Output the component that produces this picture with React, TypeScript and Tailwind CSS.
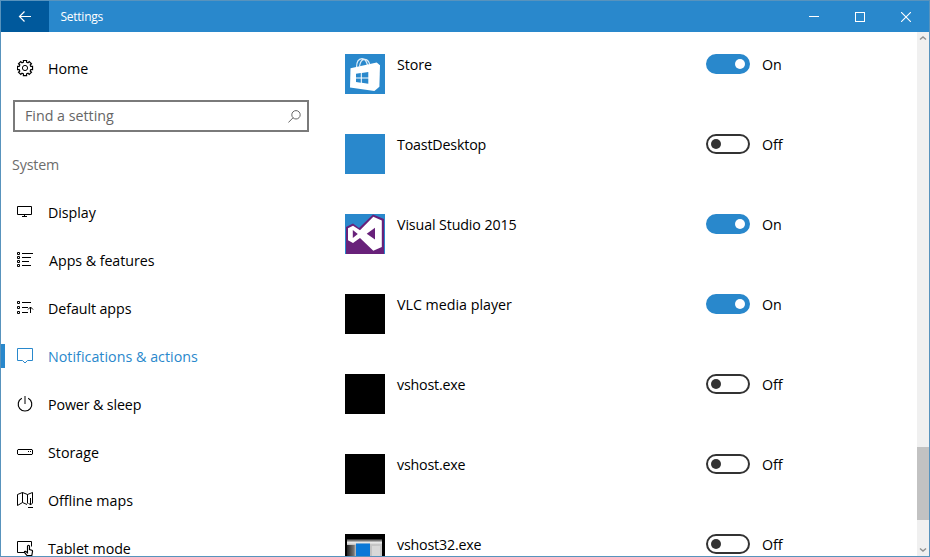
import React from "react";

type IconProps = { children: React.ReactNode };

function Glyph({ children }: IconProps) {
  return (
    <svg width="18" height="18" viewBox="0 0 18 18" fill="none" stroke="currentColor" strokeWidth="1" className="block shrink-0">
      {children}
    </svg>
  );
}

const gearPath = Array.from({ length: 8 }, (_, i) => {
  const pt = (r: number, deg: number) => {
    const a = ((deg + i * 45) * Math.PI) / 180;
    return `${(8 + r * Math.cos(a)).toFixed(2)} ${(8 + r * Math.sin(a)).toFixed(2)}`;
  };
  return `${i ? "L" : "M"}${pt(7.7, -12)} L${pt(7.7, 12)} L${pt(6, 15)} L${pt(6, 30)}`;
}).join(" ") + "Z";

const icons = {
  home: (
    <Glyph>
      <path d={gearPath} strokeWidth="1.200" />
      <circle cx="8" cy="8" r="2.6" />
    </Glyph>
  ),
  display: (
    <Glyph>
      <path d="M.5 2.500h14v8H.5zM7.500 10.500v2M5 12.500h5" />
    </Glyph>
  ),
  apps: (
    <Glyph>
      <path d="M.5.5h2v2h-2zM.5 4.5h2v2h-2zM.5 8.5h2v2h-2zM.5 12.5h2v2h-2zM5 1.5h11M5 5.5h9M5 9.5h7M5 13.5h9" />
    </Glyph>
  ),
  defaults: (
    <Glyph>
      <path d="M.5 1.5h2v2h-2zM.5 6.5h2v2h-2zM.5 11.5h2v2h-2zM5 2.5h9M5 7.5h6M5 12.5h6M13.5 13V7M11 9.5L13.5 7l2.5 2.5" />
    </Glyph>
  ),
  notifications: (
    <Glyph>
      <path d="M.5.5h15v12h-5L8 15l-2.5-2.5h-5z" />
    </Glyph>
  ),
  power: (
    <Glyph>
      <path d="M4.800 2.200a6.800 6.800 0 1 0 6.400 0" strokeWidth="1.150" />
      <path d="M8 0v8" />
    </Glyph>
  ),
  storage: (
    <Glyph>
      <path d="M1 5.5h14l.5.5v4l-.5.5H1l-.5-.5V6zM11 7.5h1M13 7.5h1" />
    </Glyph>
  ),
  maps: (
    <Glyph>
      <path d="M10 12.500L5.500 10.500.5 13.500v-11l5-2 5 2 5-2V8M5.500.5v10M10.500 2.500v9M13.500 6v7M11.500 11l2 2 2-2M11 15.500h5M15.500 8v3" />
    </Glyph>
  ),
  tablet: (
    <Glyph>
      <path d="M7 12.500H.5V1.500h14v5" />
      <path strokeWidth="1.150" d="M10.500 11V6.200a1 1 0 0 1 2 0v3.300l2.400.8q.8.4.6 1.200l-.7 4H10L7.500 12.400q-.3-1.300 1-1l2 1.400V11" />
    </Glyph>
  ),
};

type NavItem = { label: string; icon: React.ReactNode; tracking: string; active?: boolean };

const navItems: NavItem[] = [
  { label: "Display", icon: icons.display, tracking: "tracking-[-0.05px]" },
  { label: "Apps & features", icon: icons.apps, tracking: "pl-px tracking-[-0.05px]" },
  { label: "Default apps", icon: icons.defaults, tracking: "tracking-[-0.08px]" },
  { label: "Notifications & actions", icon: icons.notifications, tracking: "tracking-[0.03px]", active: true },
  { label: "Power & sleep", icon: icons.power, tracking: "tracking-[-0.12px]" },
  { label: "Storage", icon: icons.storage, tracking: "" },
  { label: "Offline maps", icon: icons.maps, tracking: "" },
  { label: "Tablet mode", icon: icons.tablet, tracking: "tracking-[-0.05px]" },
];

function NavRow({ label, icon, tracking, active }: NavItem) {
  return (
    <div className={`flex h-12 shrink-0 items-center pt-0.5 ${active ? "text-[#2988cc]" : "text-black"}`}>
      <div className={`mt-2.5 h-6 w-1 self-start ${active ? "bg-[#2988cc]" : ""}`} />
      <div className="ml-3 w-[31px]">{icon}</div>
      <span className={tracking}>{label}</span>
    </div>
  );
}

function StoreIcon() {
  return (
    <svg width="40" height="40" viewBox="0 0 40 40" className="block">
      <path fill="#2988cc" d="M0 0h40v40H0z" />
      <path fill="#fff" d="M5.500 14.300L31.700 8.500l3.300 2.800-.6 21.500-5 4.200L5 33.500z" />
      <path fill="none" stroke="#fff" strokeOpacity=".85" strokeWidth="1.200" d="M11.500 13.500c0-5 2-8.700 5.500-8.900 2.800 0 4.600 3 5.500 6.500M14.500 12.500c.5-4 2.500-7 5-7.200 2.600 0 4.500 2.500 5.200 5" />
      <path fill="#2988cc" d="M11 19.800l4.800-.7v4.400H11zM16.800 19l6.500-1v5.500h-6.500zM11 24.400h4.800v4.300l-4.800-.6zM16.800 24.400h6.500v5.300l-6.500-.9z" />
    </svg>
  );
}

function VisualStudioIcon() {
  return (
    <svg width="40" height="40" viewBox="0 0 40 40" className="block">
      <path fill="#2988cc" d="M0 0h40v40H0z" />
      <path fill="#68217a" d="M1 13l7-3.500 6 4.500L28 .5l11 4.500v35H1z" />
      <path
        fill="#fff"
        fillRule="evenodd"
        d="M28.300 2.800l8.500 3.800v26.400l-8.500 3.800L15 24l-7 5-5-2.700V14.200l5-2.500 7 4.600zM30 13.800l-8.300 5.900 8.300 5.900zM7.800 16v8l5-4z"
      />
    </svg>
  );
}

function HostIcon() {
  return (
    <svg width="40" height="40" viewBox="0 0 40 40" className="block">
      <defs>
        <linearGradient id="host-pane" x1="0" x2="1" y1="0" y2="0">
          <stop offset="0" stopColor="#222" />
          <stop offset=".2" stopColor="#777" />
          <stop offset=".25" stopColor="#bbb" />
          <stop offset="1" stopColor="#c8c8c8" />
        </linearGradient>
        <linearGradient id="host-top" x1="0" x2="0" y1="0" y2="1">
          <stop offset="0" stopColor="#222" />
          <stop offset=".6" stopColor="#eee" />
          <stop offset="1" stopColor="#bbb" />
        </linearGradient>
      </defs>
      <path d="M0 0h40v40H0z" />
      <path fill="url(#host-pane)" d="M2 10h35v30H2z" />
      <path fill="url(#host-top)" d="M2 5h35v6H2z" />
      <path fill="#0a78d7" d="M11 9.500h14V40H11z" />
      <path fill="#d8d8d8" d="M27 12h8v10h-8z" />
    </svg>
  );
}

type AppEntry = { name: string; icon: React.ReactNode; tracking: string; on: boolean };

const blackTile = <div className="size-10 bg-black" />;

const apps: AppEntry[] = [
  { name: "Store", icon: <StoreIcon />, tracking: "tracking-[-0.1px]", on: true },
  { name: "ToastDesktop", icon: <div className="size-10 bg-[#2988cc]" />, tracking: "tracking-[-0.17px]", on: false },
  { name: "Visual Studio 2015", icon: <VisualStudioIcon />, tracking: "tracking-[-0.12px]", on: true },
  { name: "VLC media player", icon: blackTile, tracking: "", on: true },
  { name: "vshost.exe", icon: blackTile, tracking: "tracking-[-0.2px]", on: false },
  { name: "vshost.exe", icon: blackTile, tracking: "tracking-[-0.2px]", on: false },
  { name: "vshost32.exe", icon: <HostIcon />, tracking: "tracking-[-0.18px]", on: false },
];

function Toggle({ on }: { on: boolean }) {
  return (
    <div
      className={`flex h-5 w-11 items-center rounded-full border-2 ${
        on ? "justify-end border-[#2988cc] bg-[#2988cc] pr-[3px]" : "border-[#333] bg-white pl-[3px]"
      }`}
    >
      <div className={`size-2.5 rounded-full ${on ? "bg-white" : "bg-[#333]"}`} />
    </div>
  );
}

function AppRow({ name, icon, tracking, on }: AppEntry) {
  return (
    <div className="flex h-20 shrink-0 items-start">
      <div className="w-10">{icon}</div>
      <span className={`ml-3 w-[309px] ${tracking}`}>{name}</span>
      <Toggle on={on} />
      <span className="ml-3">{on ? "On" : "Off"}</span>
    </div>
  );
}

export default function App() {
  return (
    <div className="flex h-[557px] w-[930px] flex-col overflow-hidden border border-[#5893bd] bg-white font-['Open_Sans','Noto_Sans',sans-serif] text-[14.25px] leading-[22px] text-black">
      <header className="flex h-[31px] shrink-0 bg-[#2988cc] text-white">
        <div className="flex w-12 items-center justify-center bg-[#00599c]">
          <svg width="14" height="12" viewBox="0 0 14 12" fill="none" stroke="currentColor" strokeWidth="1.200">
            <path d="M13 5.500H1.500M6.500.5l-5 5 5 5" />
          </svg>
        </div>
        <span className="ml-[11.5px] text-[12px] leading-[31px] tracking-[-0.25px]">Settings</span>
        <div className="ml-auto flex items-center">
          <div className="flex w-[46px] justify-center"><div className="h-px w-2.5 bg-white" /></div>
          <div className="flex w-[46px] justify-center"><div className="size-2.5 border border-white" /></div>
          <div className="flex w-[46px] justify-center">
            <svg width="10" height="10" viewBox="0 0 10 10" stroke="#fff" strokeWidth="1.100"><path d="M0 0l10 10M10 0L0 10" /></svg>
          </div>
        </div>
      </header>
      <div className="flex min-h-0 flex-1">
        <nav className="flex w-[308px] flex-col overflow-hidden pt-3">
          <NavRow label="Home" icon={icons.home} tracking="" />
          <div className="ml-3 mt-2 flex h-8 w-[296px] shrink-0 items-center justify-between border-2 border-[#7a7a7a] pl-2.5 pr-1.5 text-[#666]">
            <span>Find a setting</span>
            <svg width="13" height="13" viewBox="0 0 13 13" fill="none" stroke="#666"><circle cx="8" cy="4.800" r="4.200" /><path d="M5 7.800L.4 12.500" /></svg>
          </div>
          <div className="ml-[11px] flex h-14 shrink-0 items-center pt-[10px] tracking-[-0.15px] text-[#6c6c6c]">System</div>
          {navItems.map((item) => (
            <NavRow key={item.label} {...item} />
          ))}
        </nav>
        <main className="ml-9 flex flex-1 flex-col overflow-hidden pt-[22px]">
          {apps.map((app, i) => (
            <AppRow key={i} {...app} />
          ))}
        </main>
        <div className="flex w-3 flex-col items-center bg-[#f0f0f0] text-[#909090]">
          <svg width="8" height="8" viewBox="0 0 8 8" fill="none" stroke="currentColor" strokeWidth="1.500" className="mt-0.5 shrink-0"><path d="M1 5.500l3-2.500 3 2.500" /></svg>
          <div className="mt-[405px] h-[73px] w-full shrink-0 bg-[#c2c2c2]" />
          <svg width="8" height="8" viewBox="0 0 8 8" fill="none" stroke="currentColor" strokeWidth="1.500" className="mt-auto mb-0.5 shrink-0"><path d="M1 2.500l3 2.500 3-2.500" /></svg>
        </div>
      </div>
    </div>
  );
}
